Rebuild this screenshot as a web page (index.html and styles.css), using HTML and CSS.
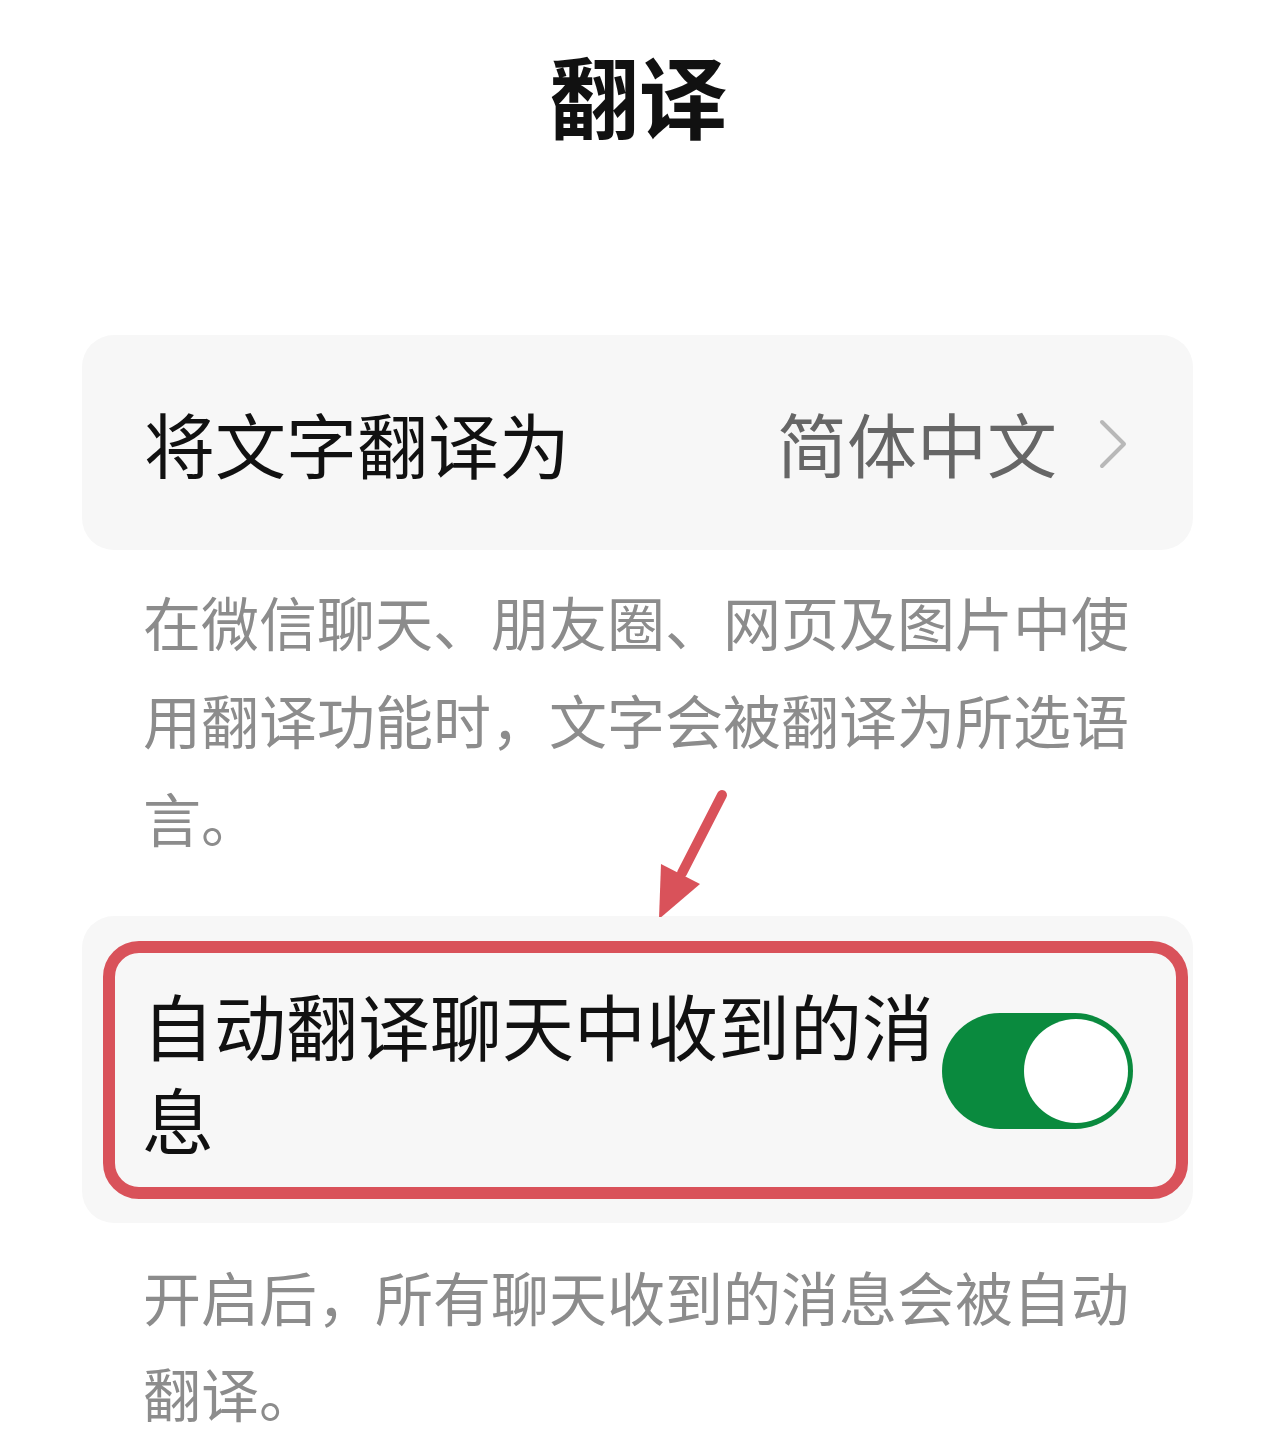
FILE: index.html
```html
<!DOCTYPE html>
<html lang="zh-CN">
<head>
<meta charset="utf-8">
<title>翻译</title>
<link rel="stylesheet" href="styles.css">
</head>
<body>
<div class="page">
  <h1 class="title">翻译</h1>

  <div class="card card-lang">
    <span class="label">将文字翻译为</span>
    <span class="value">简体中文
      <svg class="chev" width="28" height="50" viewBox="0 0 28 50"><polyline points="3,3 25,25 3,47" fill="none" stroke="#b8b8b8" stroke-width="4" stroke-linecap="round" stroke-linejoin="round"/></svg>
    </span>
  </div>
  <p class="desc">在微信聊天、朋友圈、网页及图片中使用翻译功能时，文字会被翻译为所选语言。</p>

  <div class="card card-auto">
    <span class="label label-auto">自动翻译聊天中收到的消息</span>
    <div class="toggle"><div class="knob"></div></div>
    <div class="highlight"></div>
  </div>
  <p class="desc desc-2">开启后，所有聊天收到的消息会被自动翻译。</p>

  <svg class="arrow" width="120" height="150" viewBox="0 0 120 150">
    <line x1="102" y1="28" x2="62" y2="106" stroke="#d9525a" stroke-width="10" stroke-linecap="round"/>
    <polygon points="39,152 41,97 80,117" fill="#d9525a"/>
  </svg>
</div>
</body>
</html>
```
FILE: styles.css
```css
html, body {
  margin: 0;
  padding: 0;
  background: #ffffff;
}
body {
  font-family: "Noto Sans CJK SC", "Noto Sans", sans-serif;
  color: #111111;
}
.page {
  position: relative;
  width: 1280px;
  min-height: 1432px;
  padding: 32px 87px 0 82px;
  box-sizing: border-box;
}
.title {
  margin: 0;
  text-align: center;
  font-size: 89px;
  line-height: 124px;
  font-weight: 700;
  color: #111;
  padding-left: 2px;
}
.card {
  background: #f7f7f7;
  border-radius: 32px;
  display: flex;
  align-items: center;
  box-sizing: border-box;
  position: relative;
}
.card-lang {
  margin-top: 179px;
  height: 215px;
  padding: 0 66px 0 62px;
  justify-content: space-between;
}
.label {
  font-size: 71px;
  line-height: 1;
  color: #111;
}
.value {
  display: flex;
  align-items: center;
  font-size: 70px;
  line-height: 1;
  color: #666666;
  gap: 42px;
}
.chev {
  display: block;
  margin-top: 2px;
}
.desc {
  margin: 22px 0 0 61px;
  width: 1000px;
  font-size: 58px;
  line-height: 98px;
  color: #8c8c8c;
}
.card-auto {
  margin-top: 50px;
  height: 307px;
  padding: 0 60px 0 60px;
  justify-content: space-between;
}
.label-auto {
  width: 805px;
  font-size: 72px;
  line-height: 94px;
  margin-top: 2px;
}
.toggle {
  width: 191px;
  height: 116px;
  border-radius: 58px;
  background: #0a8a3e;
  box-sizing: border-box;
  padding: 6px 5px;
  display: flex;
  justify-content: flex-end;
  margin-top: 2px;
  flex-shrink: 0;
}
.knob {
  width: 104px;
  height: 104px;
  border-radius: 50%;
  background: #ffffff;
}
.highlight {
  position: absolute;
  left: 21px;
  top: 25px;
  right: 5px;
  bottom: 24px;
  border: 12px solid #d9525a;
  border-radius: 36px;
  pointer-events: none;
}
.desc-2 {
  margin-top: 25px;
  line-height: 96px;
}
.arrow {
  position: absolute;
  left: 620px;
  top: 767px;
}
```
